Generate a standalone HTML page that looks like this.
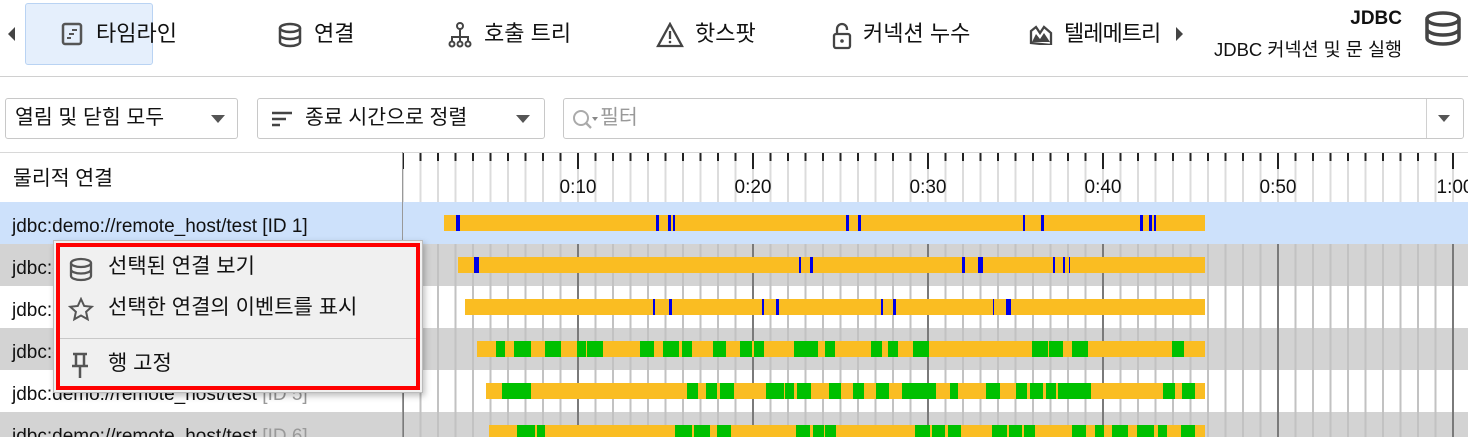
<!DOCTYPE html>
<html><head><meta charset="utf-8"><style>
*{margin:0;padding:0;box-sizing:border-box}
html,body{width:1468px;height:437px;overflow:hidden}
body{background:#fff;font-family:"Liberation Sans","Noto Sans CJK KR",sans-serif;color:#111;position:relative}
.abs{position:absolute}
.tab{position:absolute;top:19px;font-size:22px;line-height:30px;white-space:nowrap}
.tab svg{position:absolute;top:3px}
.dd{position:absolute;top:98px;height:41px;border:1px solid #c8c8c8;border-radius:3px;background:#fff;font-size:20.5px;line-height:38px}
.tri{position:absolute;width:0;height:0;border-left:7px solid transparent;border-right:7px solid transparent;border-top:8px solid #555}
.row{position:absolute;left:0;width:402px;height:42px;font-size:19px;line-height:42px;padding-left:12px;padding-top:4px;white-space:nowrap;overflow:hidden}
.mi{position:absolute;left:0;font-size:21px;line-height:30px}
</style></head><body>
<div class="abs" style="left:8px;top:27px;width:0;height:0;border-top:7px solid transparent;border-bottom:7px solid transparent;border-right:7px solid #444"></div>
<div class="abs" style="left:25px;top:3px;width:128px;height:62px;background:#e5effc;border:1px solid #b9d3f3;border-radius:3px"></div>
<div class="tab" style="left:61px"><svg style="left:0" width="22" height="24" viewBox="0 0 22 24"><rect x="2" y="2" width="18" height="20" rx="2" fill="none" stroke="#555" stroke-width="2.5"/><path d="M11 8h5M8 12h5M6 16h4" stroke="#555" stroke-width="2"/></svg><span style="margin-left:35px">타임라인</span></div>
<div class="tab" style="left:278px"><svg style="left:0" width="24" height="26" viewBox="0 0 24 26"><ellipse cx="12" cy="6" rx="10" ry="4" fill="none" stroke="#444" stroke-width="2.5"/><path d="M2 6v14c0 2.2 4.5 4 10 4s10-1.8 10-4V6M2 13c0 2.2 4.5 4 10 4s10-1.8 10-4" fill="none" stroke="#444" stroke-width="2.5"/></svg><span style="margin-left:36px">연결</span></div>
<div class="tab" style="left:448px"><svg style="left:0" width="24" height="26" viewBox="0 0 24 26"><circle cx="12" cy="4" r="3" fill="none" stroke="#444" stroke-width="2"/><path d="M12 7v7M4 20v-5h16v5M12 14v6" fill="none" stroke="#444" stroke-width="2"/><circle cx="4" cy="22" r="2.5" fill="none" stroke="#444" stroke-width="2"/><circle cx="12" cy="22" r="2.5" fill="none" stroke="#444" stroke-width="2"/><circle cx="20" cy="22" r="2.5" fill="none" stroke="#444" stroke-width="2"/></svg><span style="margin-left:36px">호출 트리</span></div>
<div class="tab" style="left:656px"><svg style="left:0" width="28" height="26" viewBox="0 0 28 26"><path d="M14 2L26 24H2Z" fill="none" stroke="#444" stroke-width="2.3"/><path d="M14 9v8" stroke="#444" stroke-width="2.3"/><circle cx="14" cy="20" r="1.3" fill="#444"/></svg><span style="margin-left:39px">핫스팟</span></div>
<div class="tab" style="left:832px"><svg style="left:0" width="20" height="28" viewBox="0 0 20 28"><path d="M5 12V7a5 5 0 0 1 10 0v1" fill="none" stroke="#444" stroke-width="2.3"/><rect x="2" y="12" width="16" height="14" rx="2" fill="none" stroke="#444" stroke-width="2.3"/><circle cx="10" cy="19" r="1.8" fill="#444"/></svg><span style="margin-left:31px">커넥션 누수</span></div>
<div class="tab" style="left:1029px"><svg style="left:0;top:6px" width="24" height="20" viewBox="0 0 24 20"><path d="M2 18V6l5-4 4 6 4-6 7 6v12Z" fill="none" stroke="#444" stroke-width="2.3"/><path d="M3 17l4-8 4 5 4-6 6 9Z" fill="#444"/></svg><span style="margin-left:35px;letter-spacing:-1px">텔레메트리</span></div>
<div class="abs" style="left:1176px;top:27px;width:0;height:0;border-top:7px solid transparent;border-bottom:7px solid transparent;border-left:7px solid #444"></div>
<div class="abs" style="right:66px;top:6px;font-size:19px;font-weight:bold;line-height:26px">JDBC</div>
<div class="abs" style="right:66px;top:37px;font-size:18.5px;line-height:26px">JDBC 커넥션 및 문 실행</div>
<svg class="abs" style="left:1424px;top:11px" width="38" height="36" viewBox="0 0 38 36"><ellipse cx="19" cy="8" rx="16" ry="6" fill="none" stroke="#444" stroke-width="3.5"/><path d="M3 8v19c0 3.3 7.2 6 16 6s16-2.7 16-6V8M3 18c0 3.3 7.2 6 16 6s16-2.7 16-6" fill="none" stroke="#444" stroke-width="3.5"/></svg>
<div class="abs" style="left:0;top:76px;width:1468px;height:1px;background:#d0d0d0"></div>
<div class="dd" style="left:5px;width:233px;padding-left:9px">열림 및 닫힘 모두<div class="tri" style="left:205px;top:16px"></div></div>
<div class="dd" style="left:257px;width:288px;padding-left:15px"><svg class="abs" style="left:14px;top:12px" width="22" height="16"><path d="M0 2h20M0 8h14M0 14h8" stroke="#444" stroke-width="2.5"/></svg><span style="margin-left:32px">종료 시간으로 정렬</span><div class="tri" style="left:258px;top:16px"></div></div>
<div class="dd" style="left:563px;width:901px;padding-left:36px;color:#999"><svg class="abs" style="left:8px;top:10px" width="28" height="22"><circle cx="9" cy="9" r="7" fill="none" stroke="#aaa" stroke-width="2"/><path d="M14 14l5 5" stroke="#aaa" stroke-width="2.3"/><path d="M20 8h6l-3 4z" fill="#888"/></svg>필터<div class="abs" style="left:862px;top:0;width:1px;height:39px;background:#d0d0d0"></div><div class="tri" style="left:874px;top:16px;border-left-width:6px;border-right-width:6px;border-top-width:7px"></div></div>
<div class="abs" style="left:0;top:152px;width:1468px;height:1px;background:#d8d8d8"></div>
<div class="abs" style="left:13px;top:164px;font-size:20.5px;line-height:30px">물리적 연결</div>
<div class="row" style="top:202px;background:#cde1fb">jdbc:demo://remote_host/test [ID 1]</div>
<div class="row" style="top:244px;background:#d3d3d3">jdbc:demo://remote_host/test [ID 2]</div>
<div class="row" style="top:286px">jdbc:demo://remote_host/test [ID 3]</div>
<div class="row" style="top:328px;background:#d3d3d3">jdbc:demo://remote_host/test [ID 4]</div>
<div class="row" style="top:370px">jdbc:demo://remote_host/test <span style="color:#999">[ID 5]</span></div>
<div class="row" style="top:412px;height:25px;background:#d3d3d3">jdbc:demo://remote_host/test <span style="color:#999">[ID 6]</span></div>
<svg class="abs" style="left:402px;top:153px" width="1066" height="284" viewBox="0 0 1066 284">
<defs>
<pattern id="mn" width="17.5" height="284" patternUnits="userSpaceOnUse"><rect x="0" y="0" width="2" height="284" fill="#c2c2c2"/></pattern>
<pattern id="mj" width="175" height="284" patternUnits="userSpaceOnUse"><rect x="0" y="0" width="2" height="284" fill="#7a7a7a"/></pattern>
<pattern id="mnh" width="17.5" height="49" patternUnits="userSpaceOnUse"><rect x="0" y="0" width="2" height="49" fill="#dcdcdc"/><rect x="0" y="0" width="2" height="8" fill="#222"/></pattern>
<pattern id="mjh" width="175" height="49" patternUnits="userSpaceOnUse"><rect x="0" y="0" width="2" height="16" fill="#222"/></pattern>
</defs>
<rect x="0" y="0" width="1066" height="49" fill="url(#mnh)"/>
<rect x="0" y="0" width="1066" height="49" fill="url(#mjh)"/>
<rect x="0" y="0" width="1" height="49" fill="#444"/>
<g font-family="Liberation Sans,sans-serif" font-size="19" fill="#111" text-anchor="middle"><text x="176" y="40">0:10</text><text x="351" y="40">0:20</text><text x="526" y="40">0:30</text><text x="701" y="40">0:40</text><text x="876" y="40">0:50</text><text x="1053" y="40">1:00</text></g>
<rect x="0" y="91" width="1066" height="42" fill="#d3d3d3"/>
<rect x="0" y="175" width="1066" height="42" fill="#d3d3d3"/>
<rect x="0" y="259" width="1066" height="25" fill="#d3d3d3"/>
<rect x="0" y="91" width="1066" height="193" fill="url(#mn)"/>
<rect x="0" y="91" width="1066" height="193" fill="url(#mj)"/>
<rect x="0" y="49" width="1066" height="42" fill="#cde1fb"/>
<rect x="0" y="49" width="1" height="235" fill="#fff"/>
<g transform="translate(-402,-153)">
<g fill="#fabd22"><rect x="444" y="215" width="761" height="16"/><rect x="458" y="257" width="747" height="16"/><rect x="465" y="299" width="740" height="16"/><rect x="477" y="341" width="728" height="16"/><rect x="486" y="383" width="719" height="16"/><rect x="489" y="425" width="716" height="12"/></g>
<g fill="#0000e6">
<rect x="456" y="215" width="4" height="16"/><rect x="656" y="215" width="3" height="16"/><rect x="668" y="215" width="3" height="16"/><rect x="673" y="215" width="2" height="16"/><rect x="846" y="215" width="3" height="16"/><rect x="858" y="215" width="3" height="16"/><rect x="1023" y="215" width="2" height="16"/><rect x="1041" y="215" width="3" height="16"/><rect x="1140" y="215" width="3" height="16"/><rect x="1149" y="215" width="3" height="16"/><rect x="1154" y="215" width="2" height="16"/>
<rect x="474" y="257" width="5" height="16"/><rect x="799" y="257" width="2" height="16"/><rect x="810" y="257" width="3" height="16"/><rect x="962" y="257" width="3" height="16"/><rect x="978" y="257" width="5" height="16"/><rect x="1053" y="257" width="2" height="16"/><rect x="1063" y="257" width="2" height="16"/><rect x="1069" y="257" width="1" height="16"/>
<rect x="653" y="299" width="2" height="16"/><rect x="669" y="299" width="3" height="16"/><rect x="762" y="299" width="2" height="16"/><rect x="776" y="299" width="3" height="16"/><rect x="881" y="299" width="2" height="16"/><rect x="893" y="299" width="3" height="16"/><rect x="993" y="299" width="1" height="16"/><rect x="1006" y="299" width="5" height="16"/>
</g>
<g fill="#00c000">
<rect x="496" y="341" width="9" height="16"/><rect x="514" y="341" width="17" height="16"/><rect x="545" y="341" width="16" height="16"/><rect x="577" y="341" width="9" height="16"/><rect x="587" y="341" width="16" height="16"/><rect x="640" y="341" width="14" height="16"/><rect x="663" y="341" width="16" height="16"/><rect x="682" y="341" width="10" height="16"/><rect x="713" y="341" width="13" height="16"/><rect x="740" y="341" width="12" height="16"/><rect x="754" y="341" width="10" height="16"/><rect x="794" y="341" width="24" height="16"/><rect x="825" y="341" width="10" height="16"/><rect x="871" y="341" width="11" height="16"/><rect x="888" y="341" width="10" height="16"/><rect x="913" y="341" width="16" height="16"/><rect x="1032" y="341" width="16" height="16"/><rect x="1049" y="341" width="14" height="16"/><rect x="1072" y="341" width="16" height="16"/><rect x="1172" y="341" width="12" height="16"/>
<rect x="502" y="383" width="29" height="16"/><rect x="687" y="383" width="11" height="16"/><rect x="706" y="383" width="11" height="16"/><rect x="720" y="383" width="14" height="16"/><rect x="766" y="383" width="18" height="16"/><rect x="785" y="383" width="9" height="16"/><rect x="797" y="383" width="14" height="16"/><rect x="829" y="383" width="12" height="16"/><rect x="853" y="383" width="11" height="16"/><rect x="876" y="383" width="13" height="16"/><rect x="902" y="383" width="34" height="16"/><rect x="950" y="383" width="8" height="16"/><rect x="986" y="383" width="14" height="16"/><rect x="1016" y="383" width="11" height="16"/><rect x="1030" y="383" width="13" height="16"/><rect x="1046" y="383" width="10" height="16"/><rect x="1058" y="383" width="33" height="16"/><rect x="1163" y="383" width="12" height="16"/><rect x="1182" y="383" width="13" height="16"/>
<rect x="517" y="425" width="18" height="12"/><rect x="537" y="425" width="8" height="12"/><rect x="675" y="425" width="17" height="12"/><rect x="694" y="425" width="16" height="12"/><rect x="717" y="425" width="14" height="12"/><rect x="796" y="425" width="14" height="12"/><rect x="813" y="425" width="11" height="12"/><rect x="825" y="425" width="11" height="12"/><rect x="915" y="425" width="15" height="12"/><rect x="932" y="425" width="13" height="12"/><rect x="948" y="425" width="13" height="12"/><rect x="992" y="425" width="15" height="12"/><rect x="1009" y="425" width="13" height="12"/><rect x="1024" y="425" width="11" height="12"/><rect x="1072" y="425" width="14" height="12"/><rect x="1095" y="425" width="9" height="12"/><rect x="1112" y="425" width="16" height="12"/><rect x="1137" y="425" width="17" height="12"/><rect x="1158" y="425" width="9" height="12"/><rect x="1181" y="425" width="14" height="12"/>
</g></g>
</svg>
<div class="abs" style="left:402px;top:152px;width:1px;height:285px;background:#999"></div>
<div class="abs" style="left:53px;top:240px;width:370px;height:153px;background:#f0f0f0;border:1px solid #bbb;box-shadow:2px 3px 6px rgba(0,0,0,.25)">
<div class="abs" style="left:2px;top:2px;right:2px;bottom:2px;border:4px solid #f00"></div>
<svg class="abs" style="left:14px;top:16px" width="26" height="26" viewBox="0 0 26 26"><ellipse cx="13" cy="6" rx="10" ry="4" fill="none" stroke="#555" stroke-width="2.3"/><path d="M3 6v13c0 2.2 4.5 4 10 4s10-1.8 10-4V6M3 12.5c0 2.2 4.5 4 10 4s10-1.8 10-4" fill="none" stroke="#555" stroke-width="2.3"/></svg>
<div class="mi" style="left:54px;top:11px">선택된 연결 보기</div>
<svg class="abs" style="left:14px;top:56px" width="26" height="26" viewBox="0 0 26 26"><path d="M13 2l3.2 7 7.5.8-5.6 5 1.6 7.5L13 18.5 6.3 22.3l1.6-7.5-5.6-5 7.5-.8Z" fill="none" stroke="#555" stroke-width="2"/></svg>
<div class="mi" style="left:54px;top:52px">선택한 연결의 이벤트를 표시</div>
<div class="abs" style="left:6px;right:6px;top:97px;height:1px;background:#c8c8c8"></div>
<svg class="abs" style="left:16px;top:110px" width="20" height="30" viewBox="0 0 20 30"><path d="M3 3h14M6 3v12M14 3v12M2 15h16M10 15v12" fill="none" stroke="#555" stroke-width="2.5"/></svg>
<div class="mi" style="left:54px;top:108px">행 고정</div>
</div>
</body></html>
